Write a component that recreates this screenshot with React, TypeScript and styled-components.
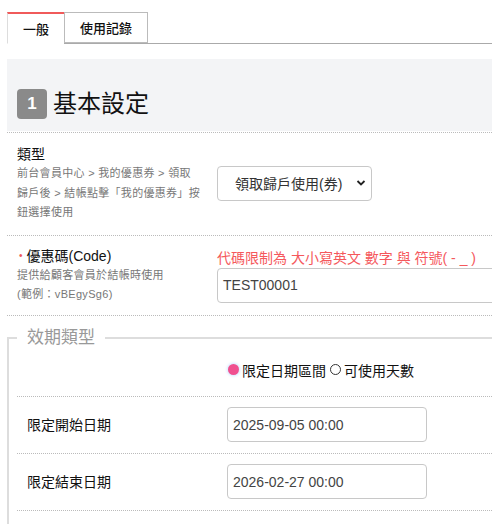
import styled, { createGlobalStyle } from "styled-components";

const GlobalStyle = createGlobalStyle`
  html, body {
    margin: 0;
    padding: 0;
    background: #fff;
  }
  body {
    font-family: "Liberation Sans", "Noto Sans CJK TC", sans-serif;
    color: #222;
  }
`;

const Page = styled.div`
  width: 492px;
  box-sizing: border-box;
  overflow: hidden;
  padding: 12px 0 0 7px;
`;

const TabBar = styled.div`
  display: flex;
  border-bottom: 1px solid #aaa;
  margin-bottom: 15px;
`;

const Tab = styled.div<{ $active: boolean }>`
  height: 29px;
  padding: 0 15px;
  display: flex;
  align-items: center;
  font-size: 13px;
  font-weight: 500;
  color: #111;
  margin-bottom: -1px;
  background: #fff;
  border: 1px solid ${p => (p.$active ? "#ddd" : "#bbb")};
  border-top: ${p => (p.$active ? "2px solid #f05a5a" : "1px solid #bbb")};
  border-bottom: ${p => (p.$active ? "1px solid #fff" : "1px solid #bbb")};
  border-right: ${p => (p.$active ? "none" : "1px solid #bbb")};
`;

const SectionHead = styled.div`
  background: #f3f4f6;
  padding: 30px 10px 12px;
  display: flex;
  align-items: center;
  gap: 6px;
  margin-bottom: 1px;
`;

const Badge = styled.span`
  width: 30px;
  height: 30px;
  border-radius: 4px;
  background: #8a8a8a;
  color: #fff;
  font-size: 17px;
  font-weight: 700;
  display: flex;
  align-items: center;
  justify-content: center;
`;

const SectionTitle = styled.h2`
  margin: 0;
  font-size: 24px;
  line-height: 30px;
  font-weight: 400;
  color: #111;
`;

const Row = styled.div<{ $first?: boolean; $indent?: boolean; $pad?: string }>`
  display: grid;
  grid-template-columns: 200px 1fr;
  align-items: center;
  padding: ${p => (p.$indent ? "0 10px" : p.$pad || "10px 10px")};
  min-height: ${p => (p.$indent ? "57px" : "auto")};
  border-top: ${p => (p.$first ? "1px dotted #bbb" : "none")};
  border-bottom: 1px dotted #bbb;
  box-sizing: border-box;
`;

const LabelCol = styled.div`
  display: flex;
  flex-direction: column;
`;

const Label = styled.div<{ $required?: boolean }>`
  font-size: 14px;
  line-height: 20px;
  color: #111;
  display: flex;
  align-items: center;
  &::before {
    content: ${p => (p.$required ? '"•"' : "none")};
    color: #f05a5a;
    font-size: 10px;
    margin: 0 4px 0 2px;
  }
`;

const Desc = styled.div`
  font-size: 11px;
  line-height: 19.5px;
  color: #777;
  letter-spacing: 0.3px;
`;

const FieldCol = styled.div`
  display: flex;
  flex-direction: column;
`;

const SelectBox = styled.div`
  position: relative;
  width: 155px;
  height: 35px;
  box-sizing: border-box;
  border: 1px solid #c8c8c8;
  border-radius: 4px;
  display: flex;
  align-items: center;
  padding-left: 17px;
  font-size: 14px;
  color: #333;
  svg {
    position: absolute;
    right: 5px;
    top: 12px;
  }
`;

const Hint = styled.div`
  font-size: 14px;
  line-height: 20px;
  color: #f5585c;
  white-space: nowrap;
`;

const TextInput = styled.div<{ $width: number }>`
  width: ${p => p.$width}px;
  flex-shrink: 0;
  height: 35px;
  box-sizing: border-box;
  border: 1px solid #c8c8c8;
  border-radius: 4px;
  display: flex;
  align-items: center;
  padding-left: 5px;
  font-size: 14px;
  color: #444;
`;

const Fieldset = styled.fieldset`
  margin: 10px 0 0;
  padding: 0 0 20px 8px;
  border: none;
  border-top: 2px solid #ddd;
  border-left: 2px solid #ddd;
  min-width: 0;
`;

const Legend = styled.legend`
  padding: 0 10px;
  font-size: 17px;
  color: #999;
  line-height: 24px;
`;

const RadioRow = styled.div`
  display: grid;
  grid-template-columns: 200px 1fr;
  align-items: center;
  padding: 10px 10px 16px;
  border-bottom: 1px dotted #bbb;
`;

const Radios = styled.div`
  display: flex;
  align-items: center;
  font-size: 14px;
  color: #111;
`;

const Radio = styled.span<{ $checked: boolean; $gap?: boolean }>`
  width: 11px;
  height: 11px;
  border-radius: 50%;
  box-sizing: border-box;
  margin: 0 3px 0 ${p => (p.$gap ? "4px" : "1px")};
  background: ${p => (p.$checked ? "#f0508f" : "#fff")};
  border: ${p => (p.$checked ? "none" : "1px solid #333")};
  box-shadow: ${p => (p.$checked ? "0 0 3px 1px #cfe3ff" : "none")};
`;

export default function App() {
  return (
    <Page>
      <GlobalStyle />
      <TabBar>
        <Tab $active>一般</Tab>
        <Tab $active={false}>使用記錄</Tab>
      </TabBar>

      <SectionHead>
        <Badge>1</Badge>
        <SectionTitle>基本設定</SectionTitle>
      </SectionHead>

      <Row $first $pad="11px 10px 12px">
        <LabelCol>
          <Label>類型</Label>
          <Desc>前台會員中心 &gt; 我的優惠券 &gt; 領取</Desc>
          <Desc>歸戶後 &gt; 結帳點擊「我的優惠券」按</Desc>
          <Desc>鈕選擇使用</Desc>
        </LabelCol>
        <FieldCol>
          <SelectBox>
            領取歸戶使用(券)
            <svg width="10" height="8" viewBox="0 0 10 8">
              <path d="M1.5 2 L5 5.5 L8.5 2" fill="none" stroke="#222" strokeWidth="1.8" />
            </svg>
          </SelectBox>
        </FieldCol>
      </Row>

      <Row>
        <LabelCol>
          <Label $required>優惠碼(Code)</Label>
          <Desc>提供給顧客會員於結帳時使用</Desc>
          <Desc>(範例：vBEgySg6)</Desc>
        </LabelCol>
        <FieldCol>
          <Hint>代碼限制為 大小寫英文 數字 與 符號( - _ )</Hint>
          <TextInput $width={320}>TEST00001</TextInput>
        </FieldCol>
      </Row>

      <Fieldset>
        <Legend>效期類型</Legend>
        <RadioRow>
          <span />
          <Radios>
            <Radio $checked />
            限定日期區間
            <Radio $checked={false} $gap />
            可使用天數
          </Radios>
        </RadioRow>
        <Row $indent>
          <Label>限定開始日期</Label>
          <TextInput $width={200}>2025-09-05 00:00</TextInput>
        </Row>
        <Row $indent>
          <Label>限定結束日期</Label>
          <TextInput $width={200}>2026-02-27 00:00</TextInput>
        </Row>
      </Fieldset>
    </Page>
  );
}
